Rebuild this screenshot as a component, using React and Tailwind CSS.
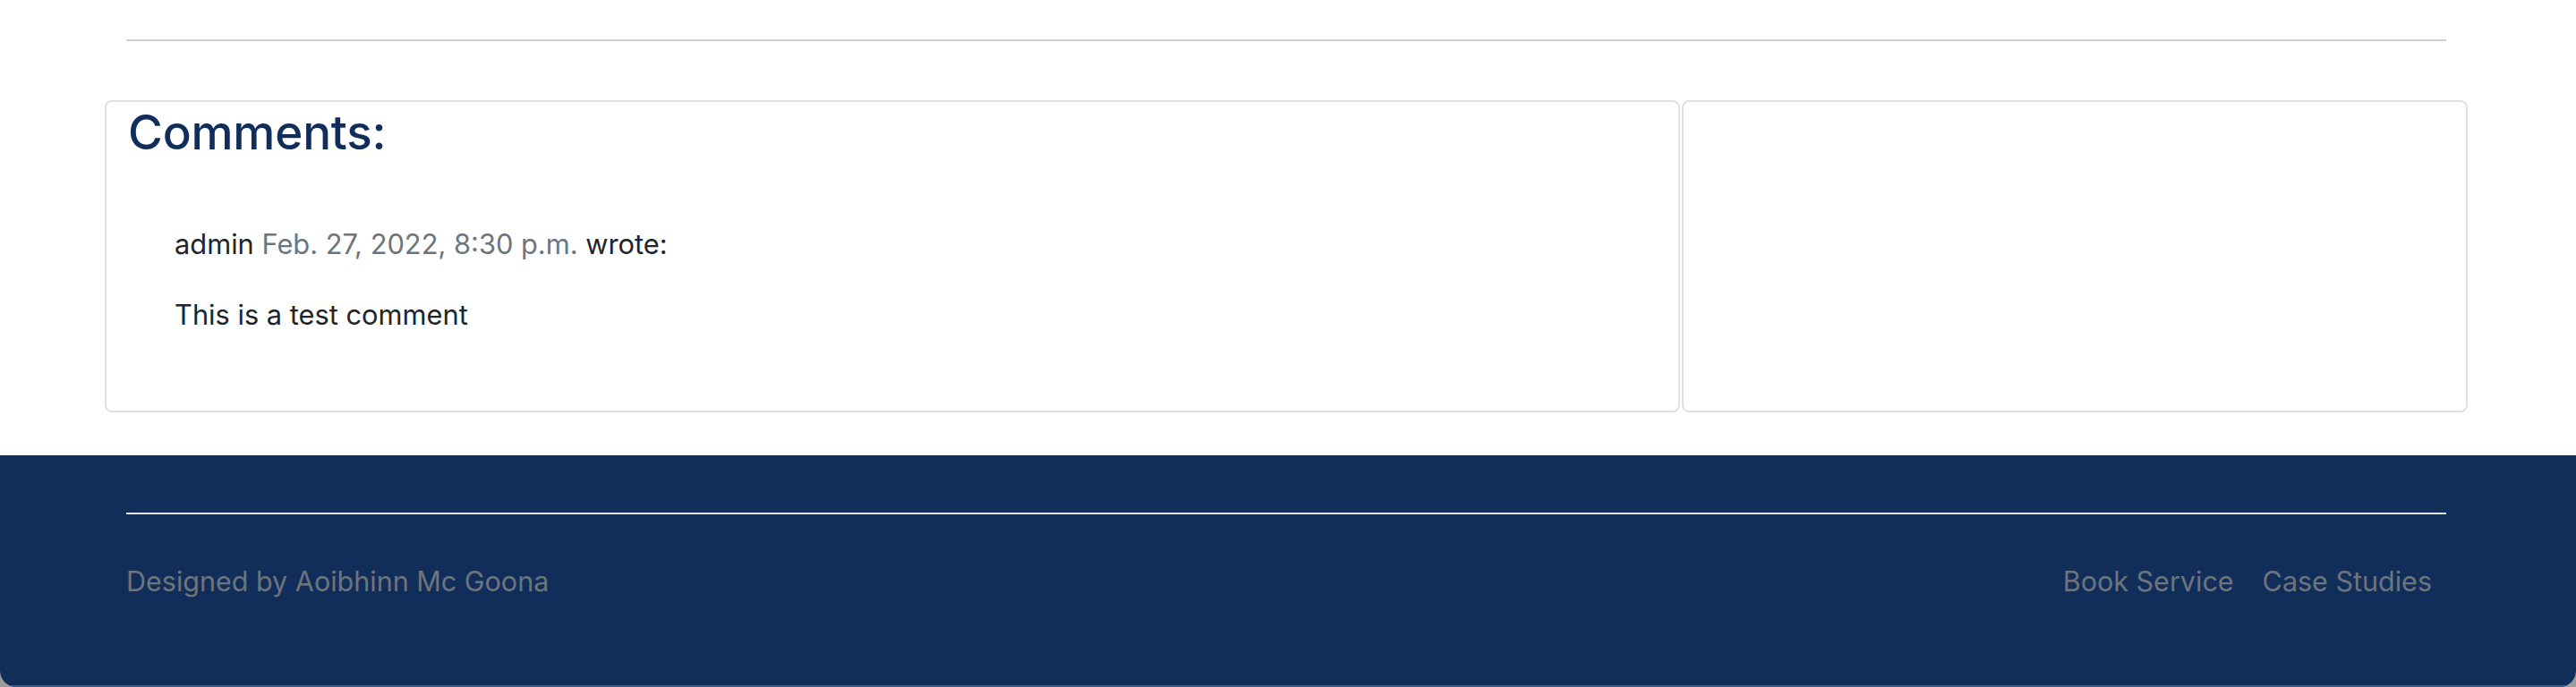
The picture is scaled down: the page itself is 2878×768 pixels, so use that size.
export default function App() {
  return (
    <div className="w-full h-[768px] bg-[#9c9c9c] overflow-hidden" style={{ fontFamily: "Inter, 'Liberation Sans', sans-serif" }}>
      <div className="h-[768px] flex flex-col rounded-b-[18px] overflow-hidden bg-white">
        <main className="bg-white">
          <div className="pl-[141px] pr-[145px] pt-[44px]">
            <hr className="border-0 h-[2px] bg-[#cdcdce]" />
          </div>
          <div className="pl-[117px] pr-[121px] pt-[66px] pb-[48px] flex gap-[2px]">
            <section className="w-[1760px] h-[349px] border-2 border-[#e0e0e0] rounded-[8px] pl-[24px] pr-[24px]">
              <h2 className="text-[53px] leading-[68px] font-medium text-[#112e5b] tracking-[-0.2px]">Comments:</h2>
              <div className="pl-[52px] pt-[68px] text-[30.8px] leading-[46px] text-[#212529]">
                <p>
                  admin <span className="text-[#6c757d]">Feb. 27, 2022, 8:30 p.m.</span> wrote:
                </p>
                <p className="mt-[33px]">This is a test comment</p>
              </div>
            </section>
            <section className="flex-1 h-[349px] border-2 border-[#e0e0e0] rounded-[8px]"></section>
          </div>
        </main>
        <footer className="flex-1 bg-[#112e5b] border-b-2 border-[#3f5a84]">
          <div className="pl-[141px] pr-[145px] pt-[64px]">
            <hr className="border-0 h-[2px] bg-[#e4e6ea]" />
            <div className="flex items-center justify-between pt-[52px] text-[30.5px] leading-[46px] text-[#6c757d]">
              <span>Designed by Aoibhinn Mc Goona</span>
              <nav className="flex">
                <a className="px-[16px]">Book Service</a>
                <a className="px-[16px]">Case Studies</a>
              </nav>
            </div>
          </div>
        </footer>
      </div>
    </div>
  );
}
